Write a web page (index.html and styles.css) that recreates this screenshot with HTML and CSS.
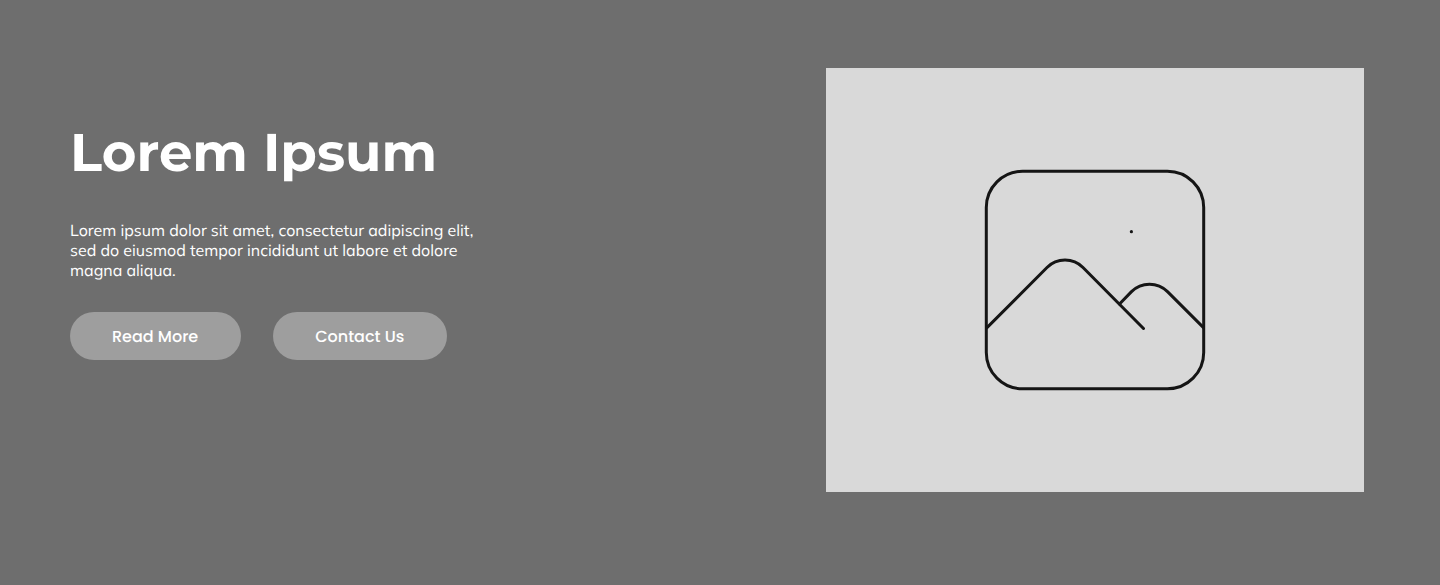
FILE: index.html
```html
<!DOCTYPE html>
<html lang="en">
<head>
<meta charset="utf-8">
<meta name="viewport" content="width=device-width, initial-scale=1">
<title>Lorem Ipsum</title>
<link rel="stylesheet" href="styles.css">
</head>
<body>
<main class="hero">
  <section class="intro">
    <h1 class="title">Lorem Ipsum</h1>
    <p class="lead">Lorem ipsum dolor sit amet, consectetur adipiscing elit, sed do eiusmod tempor incididunt ut labore et dolore magna aliqua.</p>
    <div class="actions">
      <button class="button" type="button">Read More</button>
      <button class="button" type="button">Contact Us</button>
    </div>
  </section>
  <div class="media">
    <svg class="placeholder" viewBox="0 0 240 240" role="img" aria-label="Image placeholder">
      <rect x="11.3" y="11.3" width="217.4" height="217.4" rx="36.3"/>
      <path d="M12 167.6 L72 107.5 A25.5 25.5 0 0 1 108 107.5 L168.5 168.5"/>
      <path d="M144.5 144 L156.5 131.6 A25.5 25.5 0 0 1 192.5 131.6 L228.5 167.6"/>
      <circle class="dot" cx="156.4" cy="71.7" r="1.6"/>
    </svg>
  </div>
</main>
</body>
</html>
```
FILE: styles.css
```css
* {
  box-sizing: border-box;
}

body {
  margin: 0;
  background: #6e6e6e;
  color: #fff;
  text-rendering: geometricPrecision;
}

.hero {
  display: flex;
  justify-content: space-between;
  align-items: flex-start;
  gap: 48px;
  min-height: 100vh;
  padding: 68px 76px 68px 70px;
}

.intro {
  flex: 0 1 416px;
  padding-top: 52px;
}

.title {
  margin: 0;
  font: 700 53px/66px Montserrat, Inter, sans-serif;
  white-space: nowrap;
}

.lead {
  margin: 34px 0 32px;
  font: 400 16px/20px Mulish, "Open Sans", sans-serif;
}

.actions {
  display: flex;
  gap: 32px;
}

.button {
  height: 48px;
  padding: 2px 43px 0 42px;
  border: 0;
  border-radius: 24px;
  background: #9e9e9e;
  color: #fff;
  font: 500 16px/24px Poppins, Inter, sans-serif;
  text-rendering: inherit;
  white-space: nowrap;
  cursor: pointer;
}

.media {
  display: flex;
  align-items: center;
  justify-content: center;
  flex: 0 1 538px;
  aspect-ratio: 538 / 424;
  background: #d9d9d9;
}

.placeholder {
  width: 240px;
  max-width: 80%;
  fill: none;
  stroke: #151515;
  stroke-width: 3;
  stroke-linecap: round;
}

.dot {
  fill: #151515;
  stroke: none;
}
```
